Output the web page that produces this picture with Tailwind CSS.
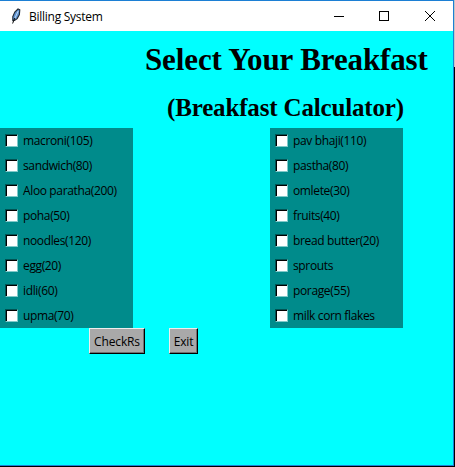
<!DOCTYPE html>
<html lang="en">
<head>
<meta charset="utf-8">
<title>Billing System</title>
<script src="https://cdn.jsdelivr.net/npm/@tailwindcss/browser@4"></script>
</head>
<body class="w-[455px] h-[467px] overflow-hidden bg-black font-['Open_Sans','Noto_Sans',sans-serif] text-black">
<div class="flex h-[467px]">
  <div class="w-[454px] h-[466px] shrink-0 flex flex-col bg-[#00ffff] border-t border-r border-b border-[#1c7fd4]">
    <header class="h-[30px] shrink-0 bg-white flex items-center">
      <svg class="ml-[10px] mt-px w-[12px] h-[17px]" viewBox="0 0 12 17">
        <path d="M2.8 12.6 L2.8 8.5 L4.8 4 L8 1 L9.8 1.8 L9.4 6.6 L7.2 10.6 L4.5 12.4Z" fill="#5f93d2" stroke="#1f2833" stroke-width="1.1"/>
        <path d="M4.8 10.5 L8.2 3" stroke="#bcd8f5" stroke-width="1"/>
        <path d="M2.6 15.5 L4.8 10" stroke="#111" stroke-width="1"/>
      </svg>
      <span class="ml-[7px] pt-px text-[12px] leading-[16px] tracking-[-0.26px] whitespace-nowrap">Billing System</span>
      <svg class="ml-auto mr-[13px] w-[108px] h-[14px]" viewBox="0 0 108 14" fill="none" stroke="#000" stroke-width="1">
        <path d="M2 7.5H12" shape-rendering="crispEdges"/>
        <rect x="47.5" y="2.5" width="9" height="9" shape-rendering="crispEdges"/>
        <path d="M93 2L103 12M103 2L93 12"/>
      </svg>
    </header>
    <main class="flex flex-col">
      <h1 class="pl-[145px] h-[56px] pt-[11px] font-['Liberation_Serif',serif] font-bold text-[31px] leading-[36px] tracking-[-0.12px] whitespace-nowrap">Select Your Breakfast</h1>
      <h2 class="pl-[167px] h-[41px] pt-[6px] font-['Liberation_Serif',serif] font-bold text-[25px] leading-[30px] tracking-[-0.16px] whitespace-nowrap">(Breakfast Calculator)</h2>
      <div class="flex gap-[137px] text-[12px] leading-[24px] whitespace-nowrap tracking-[-0.36px]">
        <div class="w-[133px] h-[200px] bg-[#008b8b]" data-items="macroni(105)|sandwich(80)|Aloo paratha(200)|poha(50)|noodles(120)|egg(20)|idli(60)|upma(70)"></div>
        <div class="w-[133px] h-[200px] bg-[#008b8b]" data-items="pav bhaji(110)|pastha(80)|omlete(30)|fruits(40)|bread butter(20)|sprouts|porage(55)|milk corn flakes"></div>
      </div>
      <div class="flex pl-[89px] gap-[24px] text-[12px] leading-[22px] tracking-[-0.15px]">
        <button class="w-[56px] h-[26px] pt-px bg-[#a9a9a9] border border-t-[#eeeeee] border-l-[#eeeeee] border-r-black border-b-black shadow-[inset_-1px_-1px_0_#707070]">CheckRs</button>
        <button class="w-[29px] h-[26px] pt-px bg-[#a9a9a9] border border-t-[#eeeeee] border-l-[#eeeeee] border-r-black border-b-black shadow-[inset_-1px_-1px_0_#707070]">Exit</button>
      </div>
    </main>
  </div>
  <div class="w-px h-[67px] bg-[#c4c4c4]"></div>
</div>
<template id="row">
  <label class="flex h-[25px] items-center pl-[5px]">
    <span class="w-[13px] h-[13px] border border-t-[#005353] border-l-[#005353] border-r-[#7fc9c9] border-b-[#7fc9c9] bg-white shadow-[inset_1px_1px_0_#000] mr-[5px]"></span>
    <span class="pt-px"></span>
  </label>
</template>
<script>
const row = document.getElementById('row');
document.querySelectorAll('[data-items]').forEach(col => {
  col.dataset.items.split('|').forEach(t => {
    const n = row.content.cloneNode(true);
    n.querySelector('label').lastElementChild.textContent = t;
    col.appendChild(n);
  });
});
</script>
</body>
</html>
